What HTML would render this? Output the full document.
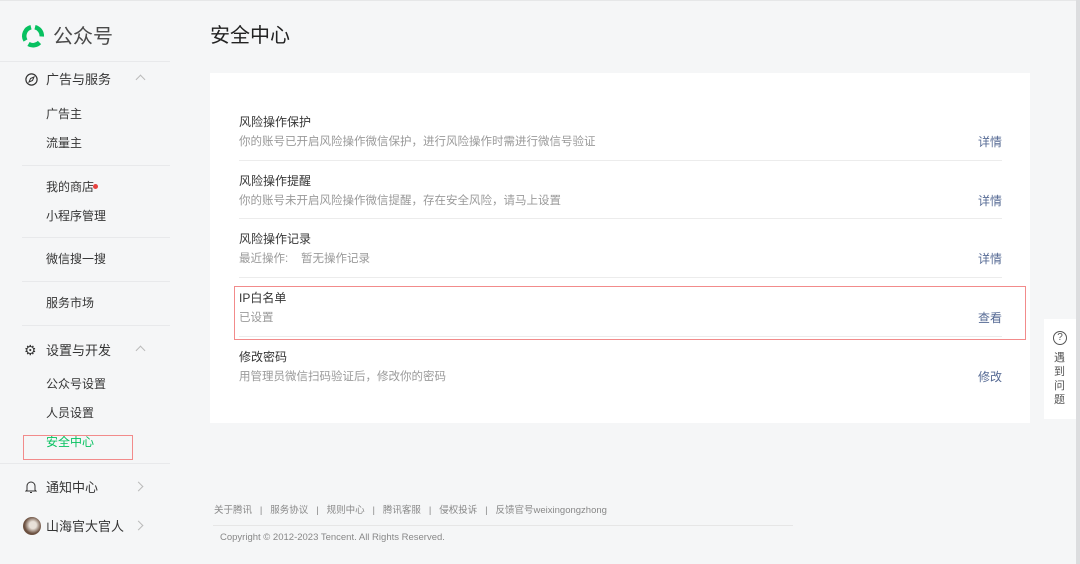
<!DOCTYPE html>
<html><head><meta charset="utf-8"><style>
*{margin:0;padding:0;box-sizing:border-box}
body{width:1080px;height:564px;background:#f5f6f7;font-family:"Liberation Sans","Noto Sans CJK SC",sans-serif;position:relative;overflow:hidden;color:#353535}
.abs{position:absolute}
.nav{font-size:12px;color:#353535;position:absolute;left:46px;line-height:14px}
.grp{font-size:13px;position:absolute;left:46px;line-height:15px}
.hr{position:absolute;left:0;width:170px;height:1px;background:#e8e9eb}
.card{left:210px;top:73px;width:820px;height:350px;background:#fff}
.t{position:absolute;left:29px;font-size:12px;color:#353535;line-height:14px}
.d{position:absolute;left:29px;font-size:11.5px;color:#9a9a9a;line-height:14px}
.l{position:absolute;right:28px;font-size:12px;color:#576b95;line-height:14px}
.line{position:absolute;left:29px;right:28px;height:1px;background:#ececec}
</style></head><body>
<div class="abs" style="left:0;top:0;width:1080px;height:1px;background:#e6e7e8"></div>
<div class="abs" style="left:1076px;top:0;width:4px;height:564px;background:#dcdddf"></div>
<svg class="abs" style="left:20px;top:23px" width="26" height="26" viewBox="0 0 26 26"><g fill="none" stroke="#07c160" stroke-width="4.5"><path d="M5.5 17.5A9 9 0 0 1 11 4.2"/><path d="M15 4.2A9 9 0 0 1 21.8 13.5"/><path d="M19.5 19.5A9 9 0 0 1 8.5 21"/></g></svg>
<div class="abs" style="left:53px;top:25px;font-size:20px;color:#4a4a4a;line-height:24px">公众号</div>
<div class="hr" style="top:61px"></div>
<svg class="abs" style="left:25px;top:73px" width="13" height="13" viewBox="0 0 13 13"><circle cx="6.5" cy="6.5" r="5.6" fill="none" stroke="#333" stroke-width="1.2"/><path d="M9 4L5.5 5.5 4 9 7.5 7.5z" fill="none" stroke="#333" stroke-width="1"/></svg>
<div class="grp" style="top:72px">广告与服务</div>
<div class="abs" style="left:137px;top:76px;width:7px;height:7px;border-left:1px solid #bbb;border-top:1px solid #bbb;transform:rotate(45deg)"></div>
<div class="nav" style="top:107px">广告主</div>
<div class="nav" style="top:136px">流量主</div>
<div class="hr" style="top:165px;left:22px;width:148px"></div>
<div class="nav" style="top:180px">我的商店</div>
<div class="abs" style="left:93px;top:184px;width:5px;height:5px;border-radius:50%;background:#e64340"></div>
<div class="nav" style="top:209px">小程序管理</div>
<div class="hr" style="top:237px;left:22px;width:148px"></div>
<div class="nav" style="top:252px">微信搜一搜</div>
<div class="hr" style="top:281px;left:22px;width:148px"></div>
<div class="nav" style="top:296px">服务市场</div>
<div class="hr" style="top:325px;left:22px;width:148px"></div>
<div class="abs" style="left:24px;top:342px;font-size:14px;color:#333;line-height:16px">⚙</div>
<div class="grp" style="top:343px">设置与开发</div>
<div class="abs" style="left:137px;top:347px;width:7px;height:7px;border-left:1px solid #bbb;border-top:1px solid #bbb;transform:rotate(45deg)"></div>
<div class="nav" style="top:377px">公众号设置</div>
<div class="nav" style="top:406px">人员设置</div>
<div class="nav" style="top:435px;color:#07c160">安全中心</div>
<div class="abs" style="left:23px;top:435px;width:110px;height:25px;border:1px solid #f28b8b"></div>
<div class="hr" style="top:463px"></div>
<svg class="abs" style="left:25px;top:480px" width="12" height="14" viewBox="0 0 12 14"><path d="M2 10V6a4 4 0 0 1 8 0v4l1 1H1z M5 12.5h2" fill="none" stroke="#333" stroke-width="1"/></svg>
<div class="grp" style="top:480px">通知中心</div>
<div class="abs" style="left:135px;top:483px;width:7px;height:7px;border-right:1px solid #bbb;border-top:1px solid #bbb;transform:rotate(45deg)"></div>
<div class="abs" style="left:23px;top:517px;width:18px;height:18px;border-radius:50%;background:radial-gradient(circle at 55% 45%,#e8e0d8 25%,#6b5040 60%)"></div>
<div class="grp" style="top:519px">山海官大官人</div>
<div class="abs" style="left:135px;top:522px;width:7px;height:7px;border-right:1px solid #bbb;border-top:1px solid #bbb;transform:rotate(45deg)"></div>

<div class="abs" style="left:210px;top:24px;font-size:20px;color:#222;line-height:24px">安全中心</div>
<div class="abs card">
<div class="t" style="top:42px">风险操作保护</div>
<div class="d" style="top:62px">你的账号已开启风险操作微信保护，进行风险操作时需进行微信号验证</div>
<div class="l" style="top:62px">详情</div>
<div class="line" style="top:87px"></div>
<div class="t" style="top:101px">风险操作提醒</div>
<div class="d" style="top:121px">你的账号未开启风险操作微信提醒，存在安全风险，请马上设置</div>
<div class="l" style="top:121px">详情</div>
<div class="line" style="top:145px"></div>
<div class="t" style="top:159px">风险操作记录</div>
<div class="d" style="top:179px">最近操作:&nbsp;&nbsp;&nbsp; 暂无操作记录</div>
<div class="l" style="top:179px">详情</div>
<div class="line" style="top:204px"></div>
<div class="t" style="top:218px">IP白名单</div>
<div class="d" style="top:238px">已设置</div>
<div class="l" style="top:238px">查看</div>
<div class="line" style="top:263px"></div>
<div class="t" style="top:277px">修改密码</div>
<div class="d" style="top:297px">用管理员微信扫码验证后，修改你的密码</div>
<div class="l" style="top:297px">修改</div>
</div>
<div class="abs" style="left:234px;top:286px;width:792px;height:54px;border:1px solid #f28b8b"></div>

<div class="abs" style="left:1044px;top:319px;width:32px;height:100px;background:#fff"></div>
<div class="abs" style="left:1053px;top:331px;width:14px;height:14px;border:1px solid #555;border-radius:50%;font-size:10px;line-height:12px;text-align:center;color:#555">?</div>
<div class="abs" style="left:1054px;top:351px;width:12px;font-size:11px;line-height:14px;color:#555">遇到问题</div>

<div class="abs" style="left:214px;top:505px;font-size:9.5px;color:#888;white-space:pre;line-height:12px">关于腾讯   |   服务协议   |   规则中心   |   腾讯客服   |   侵权投诉   |   反馈官号weixingongzhong</div>
<div class="abs" style="left:213px;top:525px;width:580px;height:1px;background:#e6e6e6"></div>
<div class="abs" style="left:220px;top:532px;font-size:9.5px;color:#888;line-height:12px">Copyright © 2012-2023 Tencent. All Rights Reserved.</div>
</body></html>
